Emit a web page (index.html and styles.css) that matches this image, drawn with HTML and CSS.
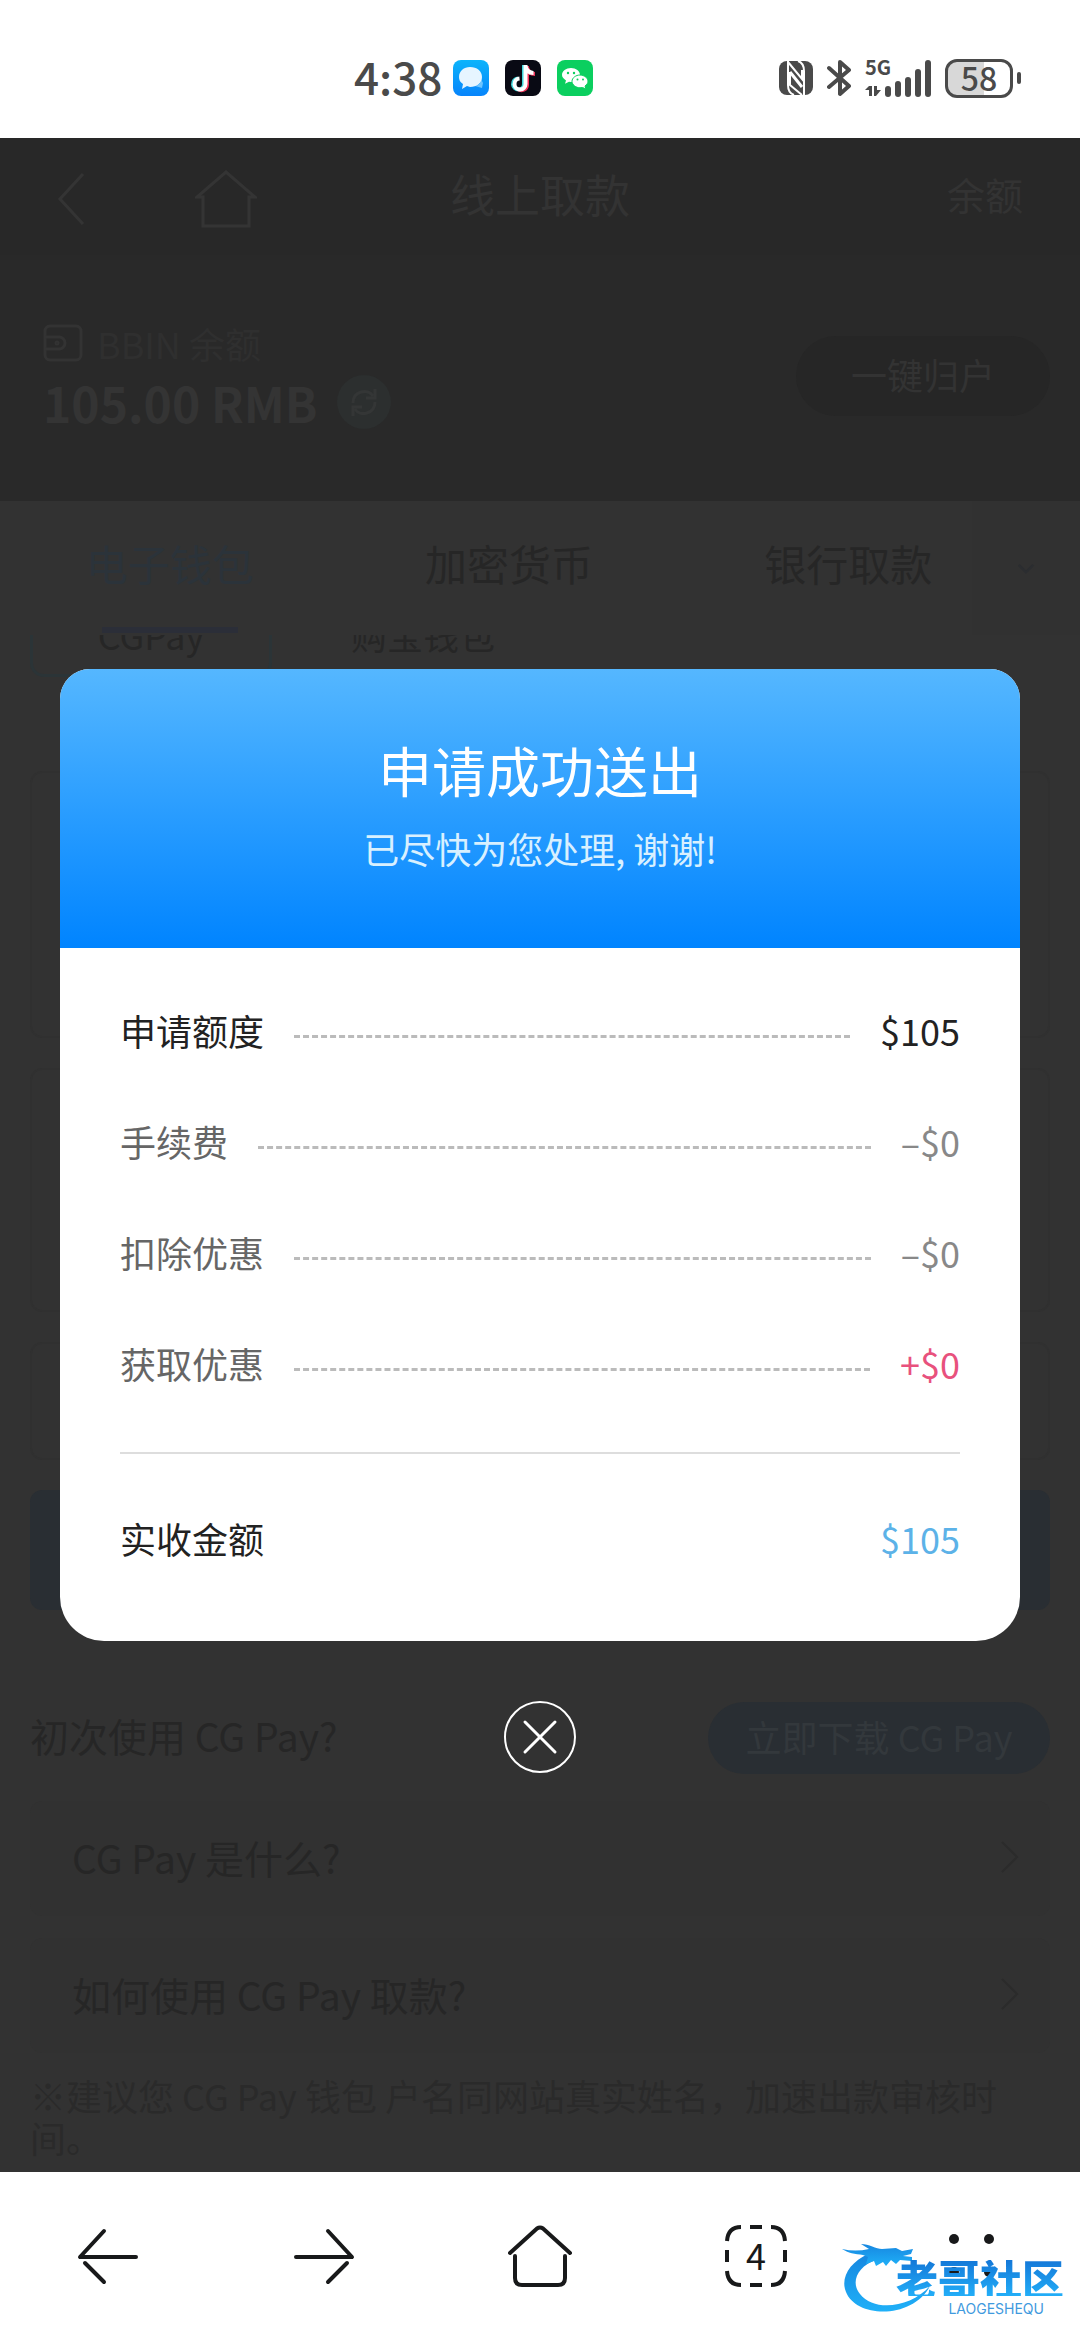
FILE: index.html
```html
<!DOCTYPE html>
<html lang="zh-CN">
<head>
<meta charset="utf-8">
<meta name="viewport" content="width=device-width">
<title>线上取款</title>
<link rel="stylesheet" href="styles.css">
</head>
<body>
<div class="status">
  <div class="status-left">
    <span class="clock">4:38</span>
    <svg width="36" height="36" viewBox="0 0 36 36"><defs><linearGradient id="msg" x1="0" y1="0" x2="0" y2="1"><stop offset="0" stop-color="#0cb4fb"/><stop offset="1" stop-color="#0784fb"/></linearGradient></defs><rect width="36" height="36" rx="8" fill="url(#msg)"/><path d="M22 26a7 6 0 0 0 6-7l2 4-1 5z" fill="#6cc4ff"/><path d="M17 7c7 0 12 4 12 10s-5 10-12 10l-3-1-5 3 1-5c-3-2-4-4-4-7 0-6 5-10 11-10z" fill="#e6f5ff"/></svg>
    <svg width="36" height="36" viewBox="0 0 36 36"><rect width="36" height="36" rx="8" fill="#090a14"/><g fill="none" stroke-width="4"><path d="M19 5v19a5.500 5.500 0 1 1-6-5.500M19 6c1 5 4 7 9 7" stroke="#41d8dc"/><path d="M22 6v19a5.500 5.500 0 0 1-9 4M22 7c1 5 4 7 8 7" stroke="#f0355a"/><path d="M20.500 5v19a5.500 5.500 0 1 1-6-5.500M20.500 6c1 5 4 7 8 7" stroke="#fff"/></g></svg>
    <svg width="36" height="36" viewBox="0 0 36 36"><rect width="36" height="36" rx="8" fill="#0bcf5f"/><path d="M14 8c5 0 9 3 9 7s-4 7-9 7l-2-.3-4 2 1-3.300C7 19 5 17.500 5 15c0-4 4-7 9-7z" fill="#fff"/><path d="M23 15c4 0 8 3 8 6 0 2-1 3.500-3 5l1 3-3.500-1.500-2.500.3c-4 0-8-3-8-6.500S19 15 23 15z" fill="#fff" stroke="#0bcf5f"/><g fill="#0bcf5f"><circle cx="11" cy="13" r="1.200"/><circle cx="17" cy="13" r="1.200"/><circle cx="20.500" cy="19.500" r="1"/><circle cx="26" cy="19.500" r="1"/></g></svg>
  </div>
  <div class="status-right">
    <svg width="34" height="36" viewBox="0 0 34 36"><rect y="1" width="34" height="34" rx="8" fill="#4a4a4a"/><path d="M9 1v24q0 8 6 10M25 35V11q0-8-6-10" fill="none" stroke="#fff" stroke-width="2"/><path d="M9 2l14 17V10M11 12v13L23 35" fill="none" stroke="#fff" stroke-width="2"/><path d="M11 12l12 15" stroke="#fff" stroke-width="3"/></svg>
    <svg width="24" height="38" viewBox="0 0 24 38" fill="none" stroke="#4a4a4a" stroke-width="4" stroke-linecap="round" stroke-linejoin="round"><path d="M2 9l20 18-9 8V3l9 8L2 28"/></svg>
    <div class="network">
      <span class="generation">5G</span>
      <svg width="66" height="38" viewBox="0 0 66 38"><g fill="#4a4a4a"><path d="M4 27h3v10H4v-6H0zM9 27h3v4h4l-5 6H9z"/><rect x="20" y="27" width="6" height="11" rx="3"/><rect x="30" y="22" width="6" height="16" rx="3"/><rect x="40" y="18" width="6" height="20" rx="3"/><rect x="50" y="10" width="6" height="28" rx="3"/><rect x="60" y="1" width="6" height="37" rx="3"/></g></svg>
    </div>
    <div class="battery"><span class="battery-case">58</span><i class="battery-tip"></i></div>
  </div>
</div>

<main class="stage">
  <div class="app">
    <header class="topbar">
      <div class="topbar-icons">
        <button class="plain" aria-label="返回"><svg width="28" height="52" viewBox="0 0 28 52" fill="none" stroke="#343434" stroke-width="3"><path d="M26 1L3 26l23 25"/></svg></button>
        <a class="plain" href="#home" aria-label="首页"><svg width="62" height="60" viewBox="0 0 62 60" fill="none" stroke="#343434" stroke-width="3"><path d="M8 28H2L31 3l29 25h-6v29H8z"/></svg></a>
      </div>
      <h1 class="topbar-title">线上取款</h1>
      <a class="topbar-link" href="#balance">余额</a>
    </header>

    <section class="balance">
      <div>
        <div class="balance-name"><svg width="40" height="38" viewBox="0 0 40 38" fill="none" stroke="#333" stroke-width="3"><rect x="2" y="2" width="36" height="34" rx="5"/><path d="M2 13h14a6 6 0 0 1 0 12H2"/><circle cx="14" cy="19" r="1"/></svg>BBIN 余额</div>
        <div class="balance-sum">105.00 RMB
          <button class="plain" aria-label="刷新"><svg width="54" height="54" viewBox="0 0 54 54"><circle cx="27" cy="27" r="27" fill="#2c2f2f"/><g fill="none" stroke="#343636" stroke-width="3"><path d="M16 28c0-12 15-15 20-7M38 14v9h-9M38 27c0 12-15 15-20 7M16 41v-9h9"/></g></svg></button>
        </div>
      </div>
      <button class="collect">一键归户</button>
    </section>

    <nav class="tabs">
      <button class="tab tab-active">电子钱包</button>
      <button class="tab">加密货币</button>
      <button class="tab">银行取款</button>
      <button class="tabs-more" aria-label="更多"><svg width="18" height="11" viewBox="0 0 20 12" fill="none" stroke="#2b2d30" stroke-width="3"><path d="M2 2l8 8 8-8"/></svg></button>
    </nav>

    <div class="content">
      <div class="chips">
        <button class="chip chip-active">CGPay</button>
        <button class="chip">购宝钱包</button>
      </div>
      <div class="form">
        <div class="panel panel-tall"></div>
        <div class="panel panel-mid"></div>
        <div class="panel panel-short"></div>
        <button class="submit" aria-label="提交"></button>
      </div>
      <div class="first-use">
        <span>初次使用 CG Pay?</span>
        <a class="download" href="#download">立即下载 CG Pay</a>
      </div>
      <div class="questions">
        <a class="question" href="#what">CG Pay 是什么?<svg width="20" height="32" viewBox="0 0 20 32" fill="none" stroke="#2b2b2b" stroke-width="2"><path d="M2 1l15 15L2 31"/></svg></a>
        <a class="question" href="#how">如何使用 CG Pay 取款?<svg width="20" height="32" viewBox="0 0 20 32" fill="none" stroke="#2b2b2b" stroke-width="2"><path d="M2 1l15 15L2 31"/></svg></a>
      </div>
      <p class="note">※建议您 CG Pay 钱包 户名同网站真实姓名，加速出款审核时间。</p>
    </div>
  </div>

  <div class="overlay">
    <section class="dialog" role="dialog" aria-labelledby="dialog-title">
      <header class="dialog-head">
        <h2 class="dialog-title" id="dialog-title">申请成功送出</h2>
        <p class="dialog-sub">已尽快为您处理, 谢谢!</p>
      </header>
      <dl class="rows">
        <div class="row row-strong"><dt>申请额度</dt><dd>$105</dd></div>
        <div class="row"><dt>手续费</dt><dd>–$0</dd></div>
        <div class="row"><dt>扣除优惠</dt><dd>–$0</dd></div>
        <div class="row row-gain"><dt>获取优惠</dt><dd>+$0</dd></div>
        <div class="row row-total"><dt>实收金额</dt><dd>$105</dd></div>
      </dl>
    </section>
    <button class="plain" aria-label="关闭"><svg width="72" height="72" viewBox="0 0 72 72" fill="none" stroke="#fff" stroke-width="2"><circle cx="36" cy="36" r="35"/><path d="M21 21l30 30M51 21L21 51" stroke-width="3" stroke-linecap="round"/></svg></button>
  </div>
</main>

<nav class="browser">
  <button class="plain" aria-label="后退"><svg width="64" height="64" viewBox="0 0 64 64" fill="none" stroke="#18191a" stroke-width="4" stroke-linecap="round" stroke-linejoin="round"><path d="M28 7L4 33h56M9 39l19 19"/></svg></button>
  <button class="plain" aria-label="前进"><svg width="64" height="64" viewBox="0 0 64 64" fill="none" stroke="#18191a" stroke-width="4" stroke-linecap="round" stroke-linejoin="round"><path d="M36 7l24 26H4M55 39L36 58"/></svg></button>
  <button class="plain" aria-label="主页"><svg width="64" height="64" viewBox="0 0 64 64" fill="none" stroke="#18191a" stroke-width="4" stroke-linecap="round" stroke-linejoin="round"><path d="M2 29L29 4.500q3-2 6 0L62 29M7 32v22q0 7 7 7h36q7 0 7-7V32"/></svg></button>
  <button class="plain windows" aria-label="窗口"><svg width="64" height="64" viewBox="0 0 64 64" fill="none" stroke="#18191a" stroke-width="4"><path d="M3 17Q4 3 17 3M26 3h12M47 3q13 0 14 14M61 26v12M61 47q-1 14-14 14M38 61H26M17 61Q4 61 3 47M3 38V26"/></svg><span class="windows-count">4</span></button>
  <button class="plain" aria-label="菜单"><svg width="64" height="64" viewBox="0 0 64 64" fill="#18191a"><circle cx="14" cy="15" r="5"/><circle cx="49" cy="15" r="5"/><circle cx="14" cy="48" r="5"/><circle cx="49" cy="48" r="5"/></svg></button>
  <div class="mark">
    <svg class="mark-dragon" width="92" height="76" viewBox="0 0 92 76"><defs><linearGradient id="drg" x1="0" y1="0" x2="0" y2="1"><stop offset="0" stop-color="#1787e0"/><stop offset="1" stop-color="#1fb0f8"/></linearGradient></defs><g fill="url(#drg)"><path d="M26 12C8 20-2 36 4 50c10 26 66 28 84-6C68 66 32 70 18 52 8 40 16 24 34 18z"/><path d="M0 7c9 2 18 2 27 0l-8-5c8 0 15 5 21 5l14-1 6 3 11-2-2 5-8 2 9 1v4l-12-1-4 4-5-4-5 6-3-4-7 4-2-5-8 3 2-7-5-2C13 12 6 11 0 7z"/></g></svg>
    <span class="mark-name">老哥社区</span>
    <span class="mark-latin">LAOGESHEQU</span>
  </div>
</nav>
</body>
</html>
```
FILE: styles.css
```css
* { box-sizing: border-box; }

body {
  margin: 0;
  min-height: 100vh;
  display: flex;
  flex-direction: column;
  background: #fff;
  font-family: "Noto Sans CJK SC", "Noto Sans", sans-serif;
  font-size: 36px;
}

h1, h2, p, dl, dd { margin: 0; font-weight: 400; }
button { border: 0; padding: 0; background: none; color: inherit; font: inherit; }
a { color: inherit; text-decoration: none; }
svg { display: block; flex: none; }
.plain { display: block; }

/* Phone status bar */
.status {
  height: 138px;
  padding: 18px 59px 0 354px;
  display: flex;
  justify-content: space-between;
  align-items: center;
  color: #4a4a4a;
}
.status-left { display: flex; align-items: center; gap: 16px; }
.clock {
  width: 83px;
  padding-bottom: 4px;
  font-size: 44px;
  line-height: 44px;
  font-weight: 500;
}
.status-right { display: flex; align-items: center; gap: 14px; }
.network { position: relative; }
.generation {
  position: absolute;
  left: 0;
  top: -2px;
  font-size: 20px;
  line-height: 20px;
  font-weight: 700;
}
.battery { display: flex; align-items: center; gap: 4px; }
.battery-case {
  width: 68px;
  height: 39px;
  border: 3px solid #4a4a4a;
  border-radius: 12px;
  background: linear-gradient(90deg, #d8d8d8 58%, #fff 58%);
  font-size: 32px;
  line-height: 30px;
  font-weight: 500;
  text-align: center;
}
.battery-tip { width: 4px; height: 12px; border-radius: 2px; background: #4a4a4a; }

/* Dimmed page under the dialog */
.stage { position: relative; flex: 1; background: #323232; }
.app { color: #262626; }

.topbar {
  height: 117px;
  padding: 0 57px;
  display: grid;
  grid-template-columns: 1fr auto 1fr;
  align-items: center;
  background: #282828;
  color: #333;
}
.topbar-icons { padding-top: 4px; display: flex; align-items: center; gap: 110px; }
.topbar-title { padding-bottom: 6px; font-size: 45px; line-height: 60px; }
.topbar-link { padding-bottom: 6px; justify-self: end; font-size: 38px; }

.balance {
  height: 246px;
  padding: 0 30px 4px 43px;
  display: flex;
  justify-content: space-between;
  align-items: center;
  background: #292929;
}
.balance-name {
  display: flex;
  align-items: center;
  gap: 14px;
  color: #2f2f2f;
  line-height: 52px;
}
.balance-sum {
  display: flex;
  align-items: center;
  gap: 20px;
  color: #343434;
  font-size: 48px;
  line-height: 66px;
  font-weight: 700;
}
.collect {
  width: 254px;
  height: 80px;
  padding-bottom: 4px;
  border-radius: 40px;
  background: #262626;
  color: #333;
}

.tabs {
  position: relative;
  z-index: 1;
  height: 134px;
  padding-right: 62px;
  display: grid;
  grid-template-columns: repeat(3, 1fr);
  background: #323232;
}
.tab { padding-bottom: 12px; font-size: 42px; }
.tab-active {
  color: #2b333a;
  background: linear-gradient(#2b2e38, #2b2e38) center bottom 2px / 136px 6px no-repeat;
}
.tabs-more {
  position: absolute;
  right: 0;
  top: 0;
  width: 108px;
  height: 134px;
  display: grid;
  place-items: center;
  background: #313131;
}

.content { padding: 0 30px; margin-top: -42px; }
.chips { display: flex; gap: 30px; }
.chip {
  width: 242px;
  height: 84px;
  padding-bottom: 2px;
  border: 3px solid transparent;
  border-radius: 14px;
}
.chip-active { border-color: #2b3437; }

.form { margin-top: 94px; display: grid; gap: 30px; }
.panel { border: 2px solid #303030; border-radius: 12px; }
.panel-tall { height: 267px; }
.panel-mid { height: 244px; }
.panel-short { height: 118px; }
.submit { height: 120px; border-radius: 12px; background: #292e33; }

.first-use {
  margin-top: 91px;
  display: flex;
  justify-content: space-between;
  align-items: center;
  font-size: 39px;
  line-height: 68px;
}
.first-use span { padding-bottom: 6px; }
.download {
  width: 342px;
  padding-bottom: 4px;
  border-radius: 36px;
  background: #292e33;
  color: #33383c;
  font-size: 36px;
  text-align: center;
}
.questions { margin-top: 26px; display: grid; gap: 22px; }
.question {
  height: 115px;
  padding: 0 30px 4px 42px;
  display: flex;
  justify-content: space-between;
  align-items: center;
  border-radius: 12px;
  background: #313131;
  font-size: 39px;
}
.note { margin-top: 21px; line-height: 42px; color: #2a2a2a; }

/* Result dialog */
.overlay {
  position: absolute;
  inset: 0;
  z-index: 2;
  padding: 531px 60px 0;
  display: flex;
  flex-direction: column;
  align-items: center;
  gap: 60px;
}
.dialog {
  width: 100%;
  border-radius: 30px 30px 44px 44px;
  overflow: hidden;
  background: #fff;
}
.dialog-head {
  padding: 68px 0 76px;
  color: #fff;
  text-align: center;
  background: linear-gradient(#55b7ff, #0084ff);
}
.dialog-title { font-size: 54px; line-height: 66px; }
.dialog-sub { margin-top: 21px; line-height: 48px; color: #d8f0ff; }

.rows { padding: 26px 60px 15px; }
.row {
  height: 111px;
  display: flex;
  align-items: center;
  gap: 30px;
  color: #888;
}
.row dt { color: #666; }
.row::before {
  content: "";
  order: 1;
  flex: 1;
  margin-top: 14px;
  border-top: 3px dashed #bbb;
}
.row dd { order: 2; }
.row-strong, .row-strong dt, .row-total dt { color: #222; }
.row-gain { color: #e8517d; }
.row-total {
  height: 174px;
  margin-top: 34px;
  padding-bottom: 4px;
  border-top: 2px solid #ddd;
  color: #5cb2e8;
}
.row-total::before { border-color: transparent; }

/* Browser toolbar */
.browser {
  position: relative;
  z-index: 3;
  height: 168px;
  display: grid;
  grid-template-columns: repeat(5, 1fr);
  place-items: center;
  background: #fff;
}
.windows { position: relative; }
.windows-count {
  position: absolute;
  inset: 0;
  font-size: 36px;
  line-height: 60px;
  color: #18191a;
  text-align: center;
}
.mark {
  position: absolute;
  right: 12px;
  bottom: 22px;
  width: 226px;
  height: 76px;
}
.mark-dragon { position: absolute; left: 0; top: 0; }
.mark-name {
  position: absolute;
  right: 4px;
  top: 18px;
  font-size: 42px;
  line-height: 36px;
  font-weight: 900;
  color: transparent;
  background: linear-gradient(#1478d8, #22aef8);
  background-clip: text;
}
.mark-latin {
  position: absolute;
  right: 24px;
  top: 60px;
  font-family: Inter, sans-serif;
  font-size: 14px;
  line-height: 14px;
  color: #3f9ade;
}
```
